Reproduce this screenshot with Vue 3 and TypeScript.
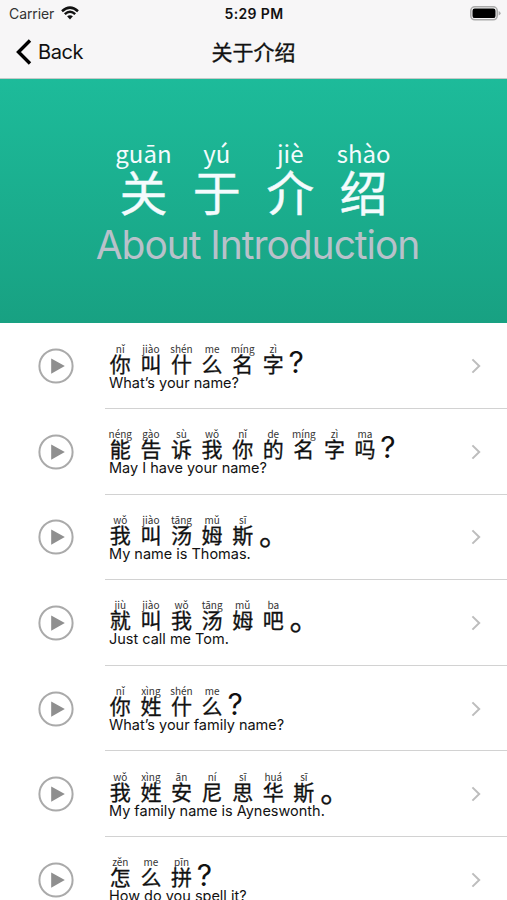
<script setup lang="ts">
interface Syllable {
  pinyin: string
  hanzi: string
}

interface Phrase {
  syllables: Syllable[]
  mark: string
  english: string
}

function pair(hanzi: string, pinyin: string): Syllable[] {
  const sounds = pinyin.split(' ')
  return Array.from(hanzi).map((char, i) => ({ hanzi: char, pinyin: sounds[i] }))
}

const heading = pair('关于介绍', 'guān yú jiè shào')

const phrases: Phrase[] = [
  { syllables: pair('你叫什么名字', 'nǐ jiào shén me míng zì'), mark: '?', english: 'What’s your name?' },
  { syllables: pair('能告诉我你的名字吗', 'néng gào sù wǒ nǐ de míng zì ma'), mark: '?', english: 'May I have your name?' },
  { syllables: pair('我叫汤姆斯', 'wǒ jiào tāng mǔ sī'), mark: '。', english: 'My name is Thomas.' },
  { syllables: pair('就叫我汤姆吧', 'jiù jiào wǒ tāng mǔ ba'), mark: '。', english: 'Just call me Tom.' },
  { syllables: pair('你姓什么', 'nǐ xìng shén me'), mark: '?', english: 'What’s your family name?' },
  { syllables: pair('我姓安尼思华斯', 'wǒ xìng ān ní sī huá sī'), mark: '。', english: 'My family name is Ayneswonth.' },
  { syllables: pair('怎么拼', 'zěn me pīn'), mark: '?', english: 'How do you spell it?' },
]
</script>

<template>
  <div class="screen">
    <header class="top">
      <div class="status">
        <div class="carrier">
          <span>Carrier</span>
          <svg class="wifi" viewBox="0 0 18 14" width="18" height="14">
            <path d="M1 5.2 Q9 -2 17 5.2" />
            <path d="M3.8 8.1 Q9 3.5 14.2 8.1" />
            <path class="dot" d="M6.1 10.3 Q9 8 11.9 10.3 L9 13.4 Z" />
          </svg>
        </div>
        <span class="clock">5:29 PM</span>
        <svg class="battery" viewBox="0 0 31 15" width="31" height="15">
          <rect class="case" x="0.8" y="0.8" width="26.4" height="13" rx="4" />
          <rect class="charge" x="2.5" y="2.5" width="23" height="9.6" rx="2.2" />
          <path class="tip" d="M28.6 5 Q30.6 5.8 30.6 7.3 Q30.6 8.8 28.6 9.6 Z" />
        </svg>
      </div>
      <nav class="nav">
        <button class="back" type="button">
          <svg viewBox="0 0 16 26" width="16" height="26"><path d="M14 1.5 L2.5 13 L14 24.5" /></svg>
          <span>Back</span>
        </button>
        <h1 class="title">关于介绍</h1>
      </nav>
    </header>

    <section class="hero">
      <div class="hero-line">
        <div v-for="(s, i) in heading" :key="i" class="hero-cell">
          <span class="hero-pinyin">{{ s.pinyin }}</span>
          <span class="hero-hanzi">{{ s.hanzi }}</span>
        </div>
      </div>
      <p class="hero-english">About Introduction</p>
    </section>

    <ul class="list">
      <li v-for="(p, i) in phrases" :key="i" class="row">
        <svg class="play" viewBox="0 0 36 36" width="36" height="36">
          <circle cx="18" cy="18" r="16.6" />
          <path d="M13.2 10.4 L26.8 18 L13.2 25.8 Z" />
        </svg>
        <div class="body">
          <div class="text">
            <div class="line">
              <div v-for="(s, j) in p.syllables" :key="j" class="cell">
                <span class="pinyin">{{ s.pinyin }}</span>
                <span class="hanzi">{{ s.hanzi }}</span>
              </div>
              <span class="mark" :class="{ stop: p.mark === '。' }">{{ p.mark }}</span>
            </div>
            <p class="english">{{ p.english }}</p>
          </div>
          <svg class="chevron" viewBox="0 0 10 16" width="10" height="16"><path d="M1.4 1.4 L8.2 8 L1.4 14.6" /></svg>
        </div>
      </li>
    </ul>
  </div>
</template>

<style>
body {
  background: #fff;
  overflow: hidden;
}
</style>

<style scoped>
.screen {
  width: 507px;
  height: 900px;
  overflow: hidden;
  background: #fff;
  color: #111;
  font-family: Inter, "Noto Sans CJK SC", sans-serif;
}

.top {
  height: 79px;
  box-sizing: border-box;
  background: #f7f6f7;
  border-bottom: 1px solid #c5cac8;
}

.status {
  display: grid;
  grid-template-columns: 1fr auto 1fr;
  align-items: center;
  height: 27px;
  padding: 0 6px 0 9px;
}

.carrier {
  display: flex;
  align-items: center;
  gap: 7px;
  font-size: 14px;
  letter-spacing: -0.1px;
  color: #333;
}

.wifi {
  margin-top: -2px;
}

.wifi path {
  fill: none;
  stroke: #111;
  stroke-width: 2.5;
}

.wifi .dot {
  fill: #111;
  stroke: none;
}

.clock {
  margin-right: 2px;
  font-size: 14px;
  font-weight: 600;
  letter-spacing: 0.35px;
}

.battery {
  justify-self: end;
}

.case {
  fill: #f7f6f7;
  stroke: #aaa;
  stroke-width: 1.6;
}

.charge {
  fill: #000;
}

.tip {
  fill: #aaa;
}

.nav {
  display: grid;
  grid-template-columns: 1fr auto 1fr;
  align-items: center;
  height: 50px;
  padding: 0 16px;
}

.back {
  display: flex;
  align-items: center;
  gap: 6px;
  padding: 0;
  border: 0;
  background: none;
  color: #111;
  font-family: inherit;
  font-size: 20px;
  letter-spacing: -0.4px;
}

.back path {
  fill: none;
  stroke: #000;
  stroke-width: 3.4;
}

.title {
  margin: -3px 0 0;
  font-family: "Noto Sans CJK SC", sans-serif;
  font-size: 21px;
  font-weight: 400;
  line-height: 30px;
  -webkit-text-stroke: 0.35px currentColor;
}

.hero {
  box-sizing: border-box;
  height: 244px;
  padding-top: 56px;
  background: linear-gradient(#1dbb9a, #18a182);
}

.hero-line {
  display: flex;
  justify-content: center;
}

.hero-cell {
  display: flex;
  flex-direction: column;
  align-items: center;
  width: 73.4px;
  color: #f4fbfd;
  font-family: "Noto Sans CJK SC", sans-serif;
}

.hero-pinyin {
  height: 30px;
  font-size: 24px;
  line-height: 36px;
}

.hero-hanzi {
  height: 54px;
  font-size: 48px;
  line-height: 51px;
  -webkit-text-stroke: 0.4px currentColor;
}

.hero-english {
  margin: 0;
  padding-left: 8px;
  color: #b8c1ca;
  font-size: 39px;
  letter-spacing: -1.05px;
  line-height: 51px;
  text-align: center;
}

.list {
  margin: 0;
  padding: 0.4px 0 0;
  list-style: none;
}

.row {
  display: flex;
  align-items: center;
  height: 85.6px;
  padding-left: 38px;
}

.play {
  flex: none;
}

.play circle {
  fill: none;
  stroke: #aaa;
  stroke-width: 2;
}

.play path {
  fill: #8f8f8f;
}

.body {
  display: flex;
  flex: 1;
  align-items: center;
  justify-content: space-between;
  box-sizing: border-box;
  height: 100%;
  margin-left: 31px;
  padding-right: 26px;
  border-bottom: 1px solid #d2d2d2;
}

.line {
  display: flex;
  height: 33px;
}

.cell {
  display: flex;
  flex-direction: column;
  align-items: center;
  width: 30.6px;
  font-family: "Noto Sans CJK SC", sans-serif;
}

.pinyin {
  height: 10px;
  color: #333;
  font-size: 10px;
  line-height: 15px;
  white-space: nowrap;
}

.hanzi {
  font-size: 21px;
  line-height: 24px;
  -webkit-text-stroke: 0.3px currentColor;
}

.mark {
  font-size: 30px;
  line-height: 42px;
}

.mark.stop {
  padding-left: 1px;
  font-family: "Noto Sans CJK SC", sans-serif;
  font-size: 31px;
  line-height: 40px;
  -webkit-text-stroke: 0.3px currentColor;
}

.english {
  margin: 0;
  padding-left: 4px;
  font-size: 14.5px;
  letter-spacing: -0.01px;
  line-height: 17px;
}

.chevron {
  margin-top: 1px;
}

.chevron path {
  fill: none;
  stroke: #bdbdbd;
  stroke-width: 2;
}
</style>
